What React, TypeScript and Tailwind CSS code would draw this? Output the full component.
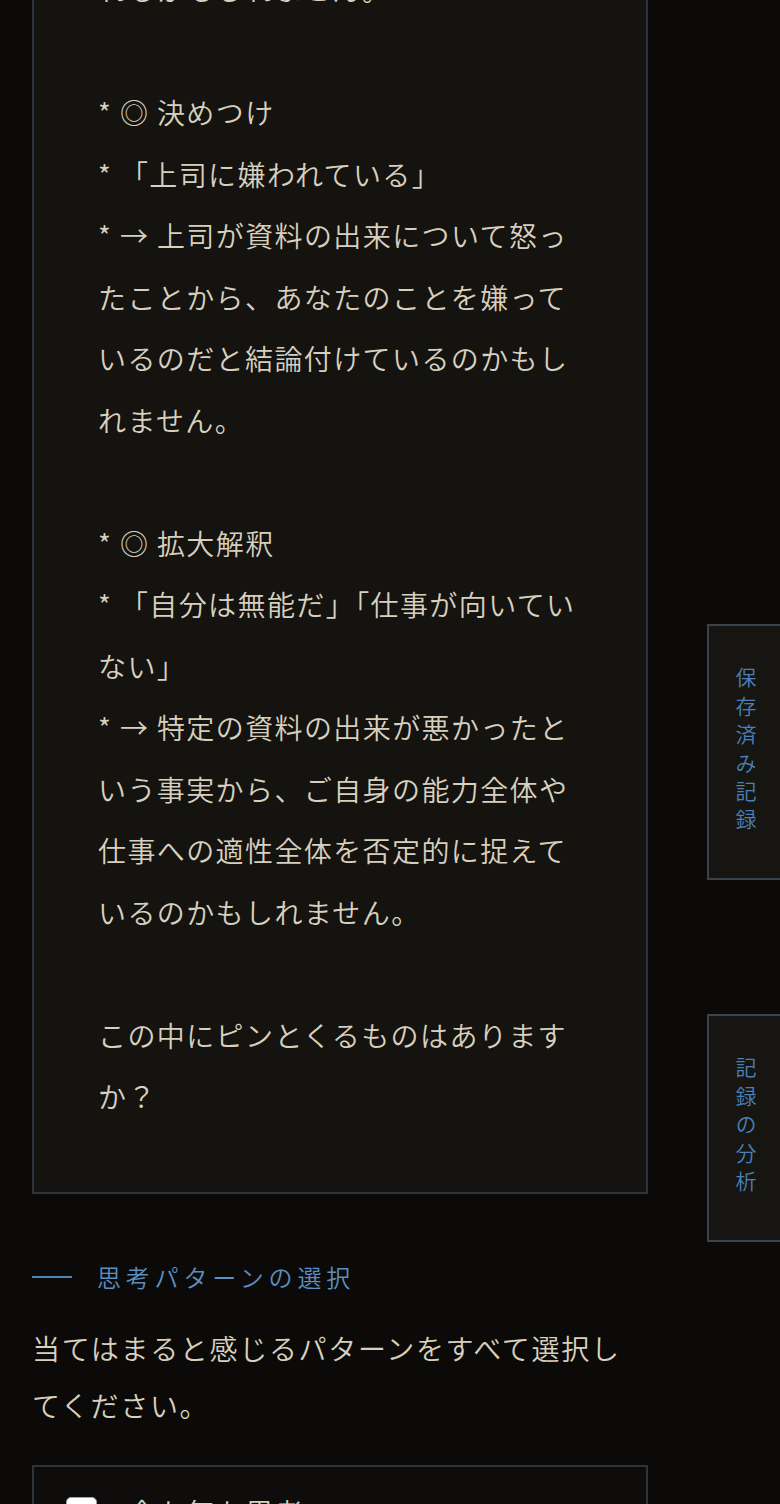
const analysis = `れるかもしれません。

* ◎ 決めつけ
* 「上司に嫌われている」
* → 上司が資料の出来について怒ったことから、あなたのことを嫌っているのだと結論付けているのかもしれません。

* ◎ 拡大解釈
* 「自分は無能だ」「仕事が向いていない」
* → 特定の資料の出来が悪かったという事実から、ご自身の能力全体や仕事への適性全体を否定的に捉えているのかもしれません。

この中にピンとくるものはありますか？`

const tabs = ['保存済み記録', '記録の分析']

export default function App () {
  return (
    <div className="relative h-[1504px] overflow-hidden bg-[#0b0a09] font-['Noto_Sans_CJK_JP',sans-serif] font-[350] text-[#d8d0bf]">
      <main className="-mt-[107px] ml-8 w-[616px]">
        <section className="border-2 border-[#2c353c] bg-[#14130f] p-16">
          <p className="whitespace-pre-wrap text-[28px] leading-[61.5px] tracking-[0.05em]">{analysis}</p>
        </section>

        <h2 className="mt-[65px] flex items-center gap-[25px] text-[24px] leading-9 tracking-[0.2em] text-[#5b8fc0]">
          <span className="h-[2px] w-10 bg-[#4f86b8]" />
          思考パターンの選択
        </h2>
        <p className="mt-[25px] text-[28px] leading-[57px] tracking-[0.06em]">
          当てはまると感じるパターンをすべて選択してください。
        </p>

        <div className="mt-[31px] border-2 border-[#2c353c] bg-[#0e0d0b] px-8 pt-[30px] pb-8">
          <label className="flex items-center gap-[31px]">
            <span className="h-[31px] w-[31px] shrink-0 rounded-[5px] border border-[#9ca3af] bg-white" />
            <span className="text-[28px] leading-[28px] tracking-[0.05em]">全か無か思考</span>
          </label>
        </div>
      </main>

      <nav className="absolute right-[-3px] top-[624px] flex flex-col gap-[134px]">
        {tabs.map((tab) => (
          <button
            key={tab}
            className="flex w-[76px] justify-center border-2 border-r-0 border-[#39434b] bg-[#171511] pt-[41px] pb-[41px]"
          >
            <span className="text-[21px] leading-[28px] tracking-[7.4px] text-[#4a80b8] [writing-mode:vertical-rl]">{tab}</span>
          </button>
        ))}
      </nav>
    </div>
  )
}
